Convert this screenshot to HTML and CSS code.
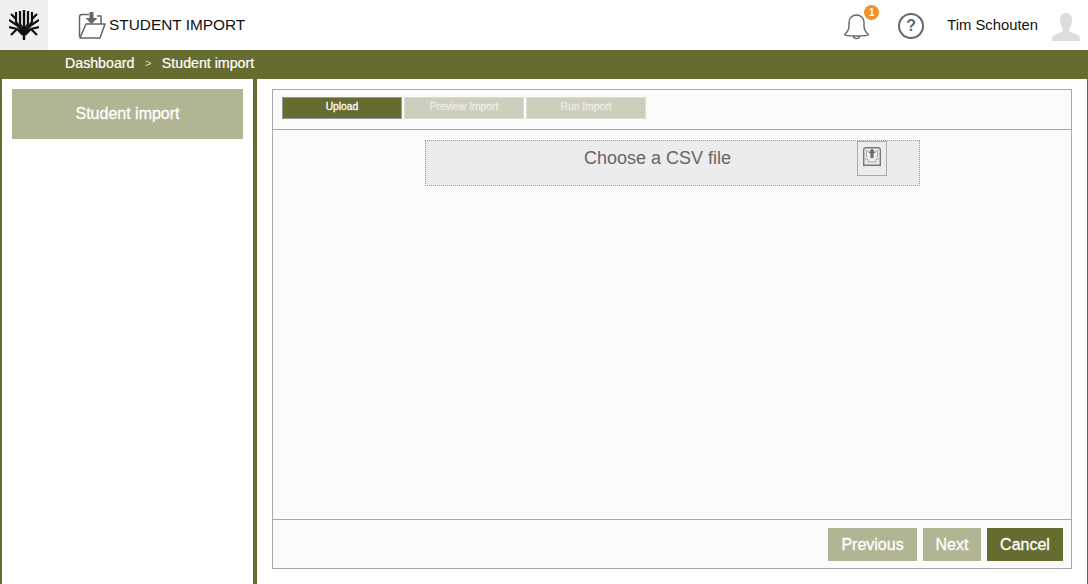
FILE: index.html
```html
<html>
<head>
  <title>Student import</title>
  <link rel="stylesheet" href="styles.css">
</head>
<body>
<header class="topbar">
  <div class="logo-box">
    <svg width="30" height="30" viewBox="0 0 30 30" fill="none" stroke="#111" stroke-width="2.200">
      <path d="M15 0V30" stroke-width="2.400"/>
      <path d="M11 1V14L15 20M19 1V14L15 20"/>
      <path d="M7 2V12L14 22M23 2V12L16 22"/>
      <path d="M2 4L7 9M28 4L23 9"/>
      <path d="M0 10L9 16L14 24M30 10L21 16L16 24"/>
      <path d="M0 17L8 19L14 25M30 17L22 19L16 25"/>
      <path d="M2 25L8 19M28 25L22 19"/>
    </svg>
  </div>
  <div class="page-title">
    <svg width="28" height="28" viewBox="0 0 28 28" fill="none" stroke="#666" stroke-width="1.500" stroke-linejoin="round">
      <path d="M2 27H22L27 13H8L2 27Z"/>
      <path d="M1.500 26V6C1.500 4.500 2.500 3.500 4 3.500H11M19 5H23V13"/>
      <path d="M11.500 1H15.500V7H19.500L13.500 13L7.500 7H11.500Z" fill="#666" stroke="none"/>
    </svg>
    <span>STUDENT IMPORT</span>
  </div>
  <div class="user-tools">
    <div class="bell">
      <svg width="28" height="28" viewBox="0 0 28 28" fill="none" stroke="#666" stroke-width="1.400" stroke-linejoin="round">
        <path d="M1.500 22.500C4 20.500 6 18 6 14V10.500C6 6 9.500 3 13.500 3C17.500 3 21 6 21 10.500V14C21 18 23 20.500 25.500 22.500C25.500 24.500 1.500 24.500 1.500 22.500Z"/>
        <path d="M10.500 24C10.500 27.500 16.500 27.500 16.500 24"/>
      </svg>
      <span class="badge">1</span>
    </div>
    <div class="help">?</div>
    <div class="user-name">Tim Schouten</div>
    <svg class="avatar" width="28" height="28" viewBox="0 0 28 28" fill="#ddd">
      <path d="M14 0C9.500 0 8 3.500 8 7.500C8 11 9.500 14 10.500 15.500V18.500C7 20.500 0 21.500 0 25V28H28V25C28 21.500 21 20.500 17.500 18.500V15.500C18.500 14 20 11 20 7.500C20 3.500 18.500 0 14 0Z"/>
    </svg>
  </div>
</header>

<nav class="breadcrumb">
  <span>Dashboard</span>
  <span class="sep">&gt;</span>
  <span>Student import</span>
</nav>

<div class="content">
  <aside class="sidebar">
    <div class="side-item">Student import</div>
  </aside>
  <main class="main">
    <div class="wizard">
      <div class="steps">
        <div class="step active">Upload</div>
        <div class="step">Preview Import</div>
        <div class="step">Run Import</div>
      </div>
      <div class="wizard-body">
        <div class="dropzone">
          <span>Choose a CSV file</span>
          <div class="drop-icon">
            <svg width="18" height="19" viewBox="0 0 18 19" fill="none" stroke="#aaa" stroke-width="1">
              <path d="M0.700 18.300V2L2.500 0.700H15.500L17.300 2V18.300Z" stroke="#777" stroke-width="1.400"/>
              <path d="M1 12H5V15H13V12H17"/>
              <path d="M3.500 3V10M14.500 3V10M3.500 4H6M12 4H14.500"/>
              <path d="M9 1.500L12.500 6H10.500V11H7.500V6H5.500Z" fill="#666" stroke="none"/>
            </svg>
          </div>
        </div>
      </div>
      <div class="wizard-footer">
        <button type="button" class="btn btn-prev">Previous</button>
        <button type="button" class="btn btn-next">Next</button>
        <button type="button" class="btn btn-dark">Cancel</button>
      </div>
    </div>
  </main>
</div>
</body>
</html>
```

FILE: styles.css
```css
* {
  box-sizing: border-box;
}
html, body {
  height: 100%;
}
body {
  margin: 0;
  display: flex;
  flex-direction: column;
  font-family: "Liberation Sans", Arial, sans-serif;
  background-color: white;
  overflow: hidden;
}
.topbar {
  height: 50px;
  display: flex;
  align-items: center;
  flex-shrink: 0;
}
.logo-box {
  width: 48px;
  height: 50px;
  background-color: #f0f0f0;
  display: flex;
  align-items: center;
  justify-content: center;
}
.page-title {
  display: flex;
  align-items: center;
  gap: 3px;
  margin-left: 30px;
  font-size: 15.400px;
  color: #111;
}
.page-title span {
  margin-bottom: 1px;
}
.user-tools {
  margin-left: auto;
  display: flex;
  align-items: center;
  padding-right: 8px;
}
.bell {
  position: relative;
  width: 28px;
  height: 28px;
  margin-top: 2px;
}
.badge {
  position: absolute;
  top: -7px;
  right: -8px;
  width: 15px;
  height: 15px;
  border-radius: 50%;
  background-color: #f0922b;
  color: white;
  font-size: 10px;
  font-weight: bold;
  line-height: 15px;
  text-align: center;
}
.help {
  width: 26px;
  height: 26px;
  margin-left: 27px;
  margin-top: 2px;
  border: 2px solid #666;
  border-radius: 50%;
  color: #666;
  font-size: 16px;
  font-weight: bold;
  line-height: 22px;
  text-align: center;
}
.user-name {
  margin-left: 23px;
  font-size: 14.800px;
  color: #111;
}
.avatar {
  margin-left: 14px;
  margin-top: 4px;
}
.breadcrumb {
  height: 29px;
  flex-shrink: 0;
  display: flex;
  align-items: center;
  padding-left: 65px;
  padding-bottom: 3px;
  background-color: #666b30;
  color: white;
  font-size: 14.200px;
  -webkit-text-stroke: 0.200px white;
}
.sep {
  margin: 0 10.500px;
  font-size: 11px;
  color: #d8d9c8;
  -webkit-text-stroke: 0;
}
.content {
  flex: 1;
  display: flex;
  border-left: 2px solid #666b30;
  border-right: 1px solid #666b30;
}
.sidebar {
  width: 255px;
  padding: 10px 10px 0;
  border-right: 4px solid #666b30;
}
.side-item {
  height: 50px;
  line-height: 50px;
  background-color: #b1b594;
  color: white;
  font-size: 16px;
  text-align: center;
  -webkit-text-stroke: 0.300px white;
}
.main {
  flex: 1;
  display: flex;
  padding: 10px 15px 15px;
}
.wizard {
  flex: 1;
  display: flex;
  flex-direction: column;
  border: 1px solid #aaa;
  background-color: #fbfbf9;
}
.steps {
  height: 40px;
  display: flex;
  gap: 2px;
  padding: 7px 9px 0;
  border-bottom: 1px solid #aaa;
}
.step {
  width: 120px;
  height: 22px;
  border: 1px solid #dcdcd6;
  background-color: #cdcfbc;
  color: #eeeee6;
  font-size: 10.300px;
  line-height: 17px;
  text-align: center;
  -webkit-text-stroke: 0.300px #eeeee6;
}
.step.active {
  border-color: #999;
  background-color: #666b30;
  color: white;
  -webkit-text-stroke: 0.300px white;
}
.wizard-body {
  flex: 1;
  padding: 10px 151px 0 152px;
}
.dropzone {
  position: relative;
  height: 46px;
  border: 1px dotted #999;
  background-color: #ececec;
  color: #666;
  font-size: 18px;
  text-align: center;
  padding: 7px 30px 0 0;
}
.drop-icon {
  position: absolute;
  top: 0;
  right: 32px;
  width: 30px;
  height: 35px;
  border: 1px solid #aaa;
  display: flex;
  justify-content: center;
  padding-top: 5px;
}
.wizard-footer {
  height: 49px;
  display: flex;
  justify-content: flex-end;
  gap: 6px;
  padding: 8px 8px 0 0;
  border-top: 1px solid #aaa;
}
.btn {
  height: 33px;
  padding: 0;
  border: none;
  color: white;
  font-family: "Liberation Sans", Arial, sans-serif;
  font-size: 16px;
  -webkit-text-stroke: 0.300px white;
}
.btn-prev {
  width: 89px;
  background-color: #b1b594;
}
.btn-next {
  width: 58px;
  background-color: #b1b594;
}
.btn-dark {
  width: 76px;
  background-color: #666b30;
}
```
